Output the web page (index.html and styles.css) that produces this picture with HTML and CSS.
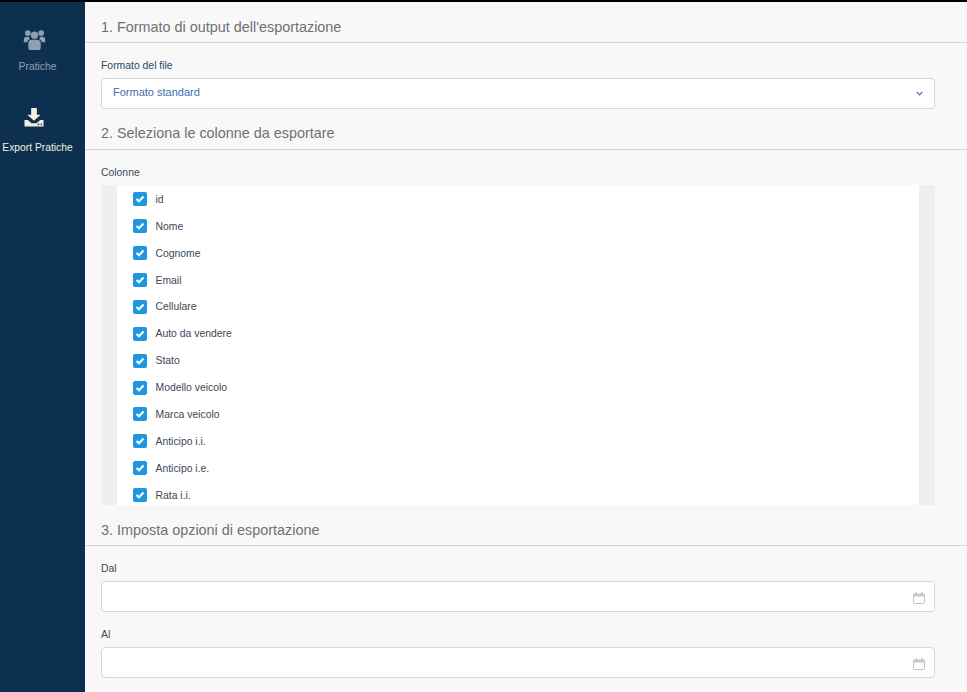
FILE: index.html
```html
<!DOCTYPE html>
<html lang="it">
<head>
<meta charset="utf-8">
<title>Export Pratiche</title>
<link rel="stylesheet" href="styles.css">
</head>
<body>
<div class="app">
  <nav class="sidebar">
    <a class="nav-item muted">
      <svg class="nav-icon users" width="23" height="21" viewBox="0 0 24 22"><g fill="currentColor"><circle cx="5" cy="4.2" r="3"/><circle cx="19" cy="4.2" r="3"/><circle cx="12" cy="6.5" r="3.8"/><path d="M0.8 14V10.5C0.8 9 2 8 3.4 8H6.5C6.2 8.8 6.6 10 7.2 10.8 5.6 11.4 4.6 12.4 4.4 14Z"/><path d="M23.2 14V10.5C23.2 9 22 8 20.6 8H17.5C17.8 8.800 17.400 10 16.800 10.800 18.400 11.400 19.400 12.400 19.600 14Z"/><path d="M5.500 20V15C5.500 12.800 7 11.300 9 11.300H15C17 11.300 18.500 12.800 18.500 15V20C18.500 21.200 17.700 22 16.500 22H7.500C6.300 22 5.500 21.200 5.500 20Z"/></g></svg>
      <span>Pratiche</span>
    </a>
    <a class="nav-item active">
      <svg class="nav-icon export" width="20" height="19" viewBox="0 0 20 20"><path fill="currentColor" d="M7 0H13V7H17L10 13.500 3 7H7Z"/><path fill="currentColor" d="M0 12.500H3.500L7.500 16H12.500L16.500 12.500H20V19.500H0Z"/><rect x="14" y="16.500" width="1.500" height="1.500" fill="#0d3050"/><rect x="17" y="16.500" width="1.500" height="1.500" fill="#0d3050"/></svg>
      <span>Export Pratiche</span>
    </a>
  </nav>
  <main class="main">
    <section class="section">
      <h2 class="section-title">1. Formato di output dell'esportazione</h2>
      <label class="field-label navy">Formato del file</label>
      <div class="control select">
        <span>Formato standard</span>
        <svg width="7" height="5" viewBox="0 0 7 5"><path d="M0.700 1L3.500 3.800 6.300 1" fill="none" stroke="#4a7bb0" stroke-width="1.200"/></svg>
      </div>
    </section>
    <section class="section middle">
      <h2 class="section-title">2. Seleziona le colonne da esportare</h2>
      <label class="field-label">Colonne</label>
      <div class="list-frame">
        <ul class="list">
          <li class="item"><span class="check"><svg width="10" height="8" viewBox="0 0 10 8"><path d="M1.500 4L4 6.300 8.500 1.500" fill="none" stroke="#fff" stroke-width="2"/></svg></span>id</li>
          <li class="item"><span class="check"><svg width="10" height="8" viewBox="0 0 10 8"><path d="M1.500 4L4 6.300 8.500 1.500" fill="none" stroke="#fff" stroke-width="2"/></svg></span>Nome</li>
          <li class="item"><span class="check"><svg width="10" height="8" viewBox="0 0 10 8"><path d="M1.500 4L4 6.300 8.500 1.500" fill="none" stroke="#fff" stroke-width="2"/></svg></span>Cognome</li>
          <li class="item"><span class="check"><svg width="10" height="8" viewBox="0 0 10 8"><path d="M1.500 4L4 6.300 8.500 1.500" fill="none" stroke="#fff" stroke-width="2"/></svg></span>Email</li>
          <li class="item"><span class="check"><svg width="10" height="8" viewBox="0 0 10 8"><path d="M1.500 4L4 6.300 8.500 1.500" fill="none" stroke="#fff" stroke-width="2"/></svg></span>Cellulare</li>
          <li class="item"><span class="check"><svg width="10" height="8" viewBox="0 0 10 8"><path d="M1.500 4L4 6.300 8.500 1.500" fill="none" stroke="#fff" stroke-width="2"/></svg></span>Auto da vendere</li>
          <li class="item"><span class="check"><svg width="10" height="8" viewBox="0 0 10 8"><path d="M1.500 4L4 6.300 8.500 1.500" fill="none" stroke="#fff" stroke-width="2"/></svg></span>Stato</li>
          <li class="item"><span class="check"><svg width="10" height="8" viewBox="0 0 10 8"><path d="M1.500 4L4 6.300 8.500 1.500" fill="none" stroke="#fff" stroke-width="2"/></svg></span>Modello veicolo</li>
          <li class="item"><span class="check"><svg width="10" height="8" viewBox="0 0 10 8"><path d="M1.500 4L4 6.300 8.500 1.500" fill="none" stroke="#fff" stroke-width="2"/></svg></span>Marca veicolo</li>
          <li class="item"><span class="check"><svg width="10" height="8" viewBox="0 0 10 8"><path d="M1.500 4L4 6.300 8.500 1.500" fill="none" stroke="#fff" stroke-width="2"/></svg></span>Anticipo i.i.</li>
          <li class="item"><span class="check"><svg width="10" height="8" viewBox="0 0 10 8"><path d="M1.500 4L4 6.300 8.500 1.500" fill="none" stroke="#fff" stroke-width="2"/></svg></span>Anticipo i.e.</li>
          <li class="item"><span class="check"><svg width="10" height="8" viewBox="0 0 10 8"><path d="M1.500 4L4 6.300 8.500 1.500" fill="none" stroke="#fff" stroke-width="2"/></svg></span>Rata i.i.</li>
        </ul>
      </div>
    </section>
    <section class="section">
      <h2 class="section-title">3. Imposta opzioni di esportazione</h2>
      <label class="field-label">Dal</label>
      <div class="control date">
        <svg width="12" height="12" viewBox="0 0 12 12"><rect x="0.500" y="2" width="11" height="9.500" rx="1" fill="none" stroke="#b8c4d0"/><rect x="0.500" y="2" width="11" height="2.500" fill="#c8c8c8"/><rect x="2" y="0.500" width="2" height="2.500" fill="#c4c4c4"/><rect x="8" y="0.500" width="2" height="2.500" fill="#c4c4c4"/></svg>
      </div>
      <label class="field-label second">Al</label>
      <div class="control date">
        <svg width="12" height="12" viewBox="0 0 12 12"><rect x="0.500" y="2" width="11" height="9.500" rx="1" fill="none" stroke="#b8c4d0"/><rect x="0.500" y="2" width="11" height="2.500" fill="#c8c8c8"/><rect x="2" y="0.500" width="2" height="2.500" fill="#c4c4c4"/><rect x="8" y="0.500" width="2" height="2.500" fill="#c4c4c4"/></svg>
      </div>
    </section>
  </main>
</div>
</body>
</html>
```
FILE: styles.css
```css
* { box-sizing: border-box; }
html, body { margin: 0; height: 100%; overflow: hidden; }
body {
  font-family: "Liberation Sans", Arial, sans-serif;
  background: #f8f8f8;
  border-top: 2px solid #000;
}
.app { display: flex; height: 690px; }
.sidebar {
  width: 85px;
  flex: none;
  background: #0d3050;
  display: flex;
  flex-direction: column;
  align-items: center;
  padding: 27px 10px 0 0;
  font-size: 10.3px;
}
.nav-item { display: flex; flex-direction: column; align-items: center; white-space: nowrap; }
.nav-item span { line-height: 12px; }
.nav-icon { margin-right: 7px; }
.muted { color: #8ea0b2; height: 79px; }
.users { margin-bottom: 11px; }
.active { color: #f4eee0; }
.export { margin-bottom: 15px; }
.main { flex: 1; min-width: 0; display: flex; flex-direction: column; }
.section { padding-top: 15px; }
.section-title {
  margin: 0;
  padding: 0 0 5px 16px;
  font-size: 14.4px;
  line-height: 20px;
  font-weight: 400;
  color: #707070;
  border-bottom: 1px solid #d4d6d6;
}
.middle { padding-top: 14px; }
.middle .section-title { padding-bottom: 6px; }
.field-label {
  display: block;
  margin: 16px 0 0 16px;
  font-size: 10.4px;
  line-height: 14px;
  height: 19px;
  color: #3c4858;
}
.navy { color: #25496d; }
.control {
  width: 834px;
  margin-left: 16px;
  height: 31px;
  background: #fff;
  border: 1px solid #d3d8d8;
  border-radius: 4px;
  display: flex;
  align-items: center;
  justify-content: space-between;
  padding: 0 11px 3px;
  font-size: 11px;
  color: #3f6daa;
}
.select svg { margin-top: 3px; }
.date { justify-content: flex-end; padding: 2px 9px 0 0; }
.list-frame {
  width: 834px;
  height: 320px;
  margin-left: 16px;
  padding: 0 16px;
  background: #efefef;
  overflow: hidden;
}
.list {
  list-style: none;
  margin: 0;
  padding: 0.500px 0 0 16px;
  height: 100%;
  background: #fff;
  overflow: hidden;
}
.item {
  display: flex;
  align-items: center;
  height: 26.880px;
  padding-top: 1px;
  font-size: 10.4px;
  color: #3c4858;
}
.check {
  width: 14px;
  height: 14px;
  margin-right: 8.500px;
  flex: none;
  background: #2196e0;
  border-radius: 2px;
  display: flex;
  align-items: center;
  justify-content: center;
}
```
